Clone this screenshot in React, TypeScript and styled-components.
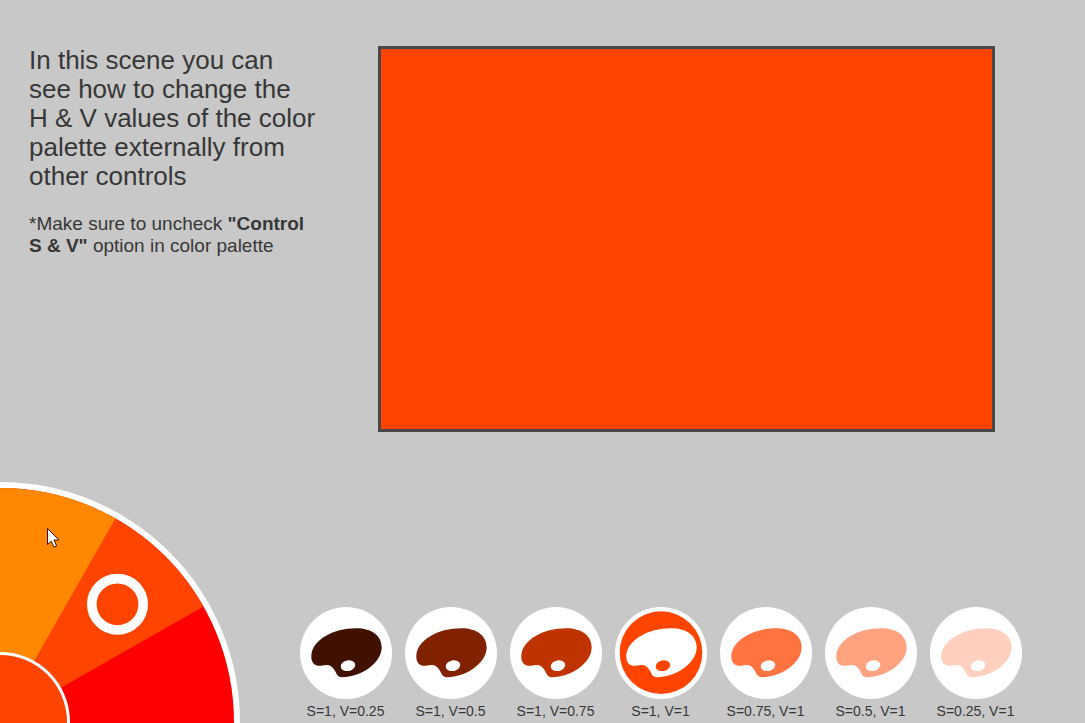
import React, { useState } from "react";
import styled, { createGlobalStyle } from "styled-components";

const GlobalStyle = createGlobalStyle`
  * { box-sizing: border-box; }
  body {
    margin: 0;
    background: #c8c8c8;
    color: #373737;
    font-family: "Liberation Sans", Arial, sans-serif;
  }
`;

const Page = styled.main`
  min-height: 100vh;
  display: flex;
  flex-direction: column;
  justify-content: space-between;
  overflow: hidden;
`;

const Top = styled.section`
  display: flex;
  align-items: flex-start;
  justify-content: space-between;
  gap: 49px;
  padding: 46px 90px 0 29px;
`;

const Intro = styled.div`
  flex: 0 0 300px;
`;

const Lead = styled.p`
  margin: 0 0 22px;
  font-size: 26px;
  line-height: 29px;
`;

const Note = styled.p`
  margin: 0;
  font-size: 19px;
  line-height: 22px;
`;

const Preview = styled.div<{ $color: string }>`
  flex: 1;
  aspect-ratio: 8 / 5;
  border: 3px solid #484848;
  background: ${(p) => p.$color};
`;

const Bottom = styled.section`
  display: flex;
  align-items: flex-end;
  gap: 53px;
  padding-right: 57px;
`;

const Wheel = styled.svg`
  display: block;
  flex: none;
  width: 240px;
  height: 241px;
`;

const Swatches = styled.fieldset`
  flex: 1;
  min-width: 0;
  display: grid;
  grid-template-columns: repeat(7, 1fr);
  margin: 0;
  padding: 0 0 3px;
  border: 0;
`;

const Swatch = styled.label`
  display: flex;
  flex-direction: column;
  align-items: center;
  gap: 3px;
  font-size: 14px;
  line-height: 18px;
  white-space: nowrap;
  cursor: pointer;
`;

const Radio = styled.input`
  appearance: none;
  grid-area: 1 / 1;
  width: 92px;
  height: 92px;
  margin: 0;
  border-radius: 50%;
  background: #ffffff;
  cursor: pointer;
`;

const Disc = styled.span`
  display: grid;
`;

const Icon = styled.svg`
  grid-area: 1 / 1;
  width: 92px;
  height: 92px;
  pointer-events: none;
`;

const options = [
  { label: "S=1, V=0.25", color: "#401100" },
  { label: "S=1, V=0.5", color: "#802200" },
  { label: "S=1, V=0.75", color: "#bf3300" },
  { label: "S=1, V=1", color: "#ff4400" },
  { label: "S=0.75, V=1", color: "#ff7340" },
  { label: "S=0.5, V=1", color: "#ffa280" },
  { label: "S=0.25, V=1", color: "#ffd0bf" },
];

function PaletteIcon({ color, active }: { color: string; active: boolean }) {
  const shape = active ? "#ffffff" : color;
  const hole = active ? color : "#ffffff";
  return (
    <Icon viewBox="0 6 276 276" aria-hidden="true">
      {active && <circle cx="138" cy="143" r="124" fill={color} />}
      <path
        fill={shape}
        d="M34 152C37 106 98 70 168 70C216 70 245 93 245 127C245 175 182 217 126 217C112 217 110 206 104 196C97 183 88 179 78 180C68 181 62 183 55 182C41 181 33 169 34 152Z"
      />
      <ellipse cx="144" cy="182" rx="22" ry="16" transform="rotate(-12 144 182)" fill={hole} />
    </Icon>
  );
}

function HueWheel({ color }: { color: string }) {
  return (
    <Wheel viewBox="0 0 240 241" role="img" aria-label="Hue wheel">
      <circle cx="0" cy="240" r="240" fill="#ffffff" />
      <circle cx="0" cy="240" r="234" fill="#ff0000" />
      <path d="M-1 241L115.5 36.5A234 234 0 0 1 203.5 124.5Z" fill="#ff4400" />
      <path d="M-1 241L-1 6A234 234 0 0 1 115.5 36.5Z" fill="#ff8800" />
      <circle cx="0" cy="240" r="70" fill="#ffffff" />
      <circle cx="0" cy="240" r="67" fill={color} />
      <circle cx="117.5" cy="122.3" r="25.7" fill={color} stroke="#ffffff" strokeWidth="9.6" />
      <path
        d="M47.5 46.5V62.5L51.2 59.2L54 65.2L56.6 64L54 58H59Z"
        fill="#ffffff"
        stroke="#401100"
        strokeWidth="1"
      />
    </Wheel>
  );
}

export default function App() {
  const [selected, setSelected] = useState(3);
  const color = options[selected].color;
  return (
    <>
      <GlobalStyle />
      <Page>
        <Top>
          <Intro>
            <Lead>
              In this scene you can
              <br />
              see how to change the
              <br />
              H &amp; V values of the color
              <br />
              palette externally from
              <br />
              other controls
            </Lead>
            <Note>
              *Make sure to uncheck <b>"Control</b>
              <br />
              <b>S &amp; V"</b> option in color palette
            </Note>
          </Intro>
          <Preview $color={color} />
        </Top>
        <Bottom>
          <HueWheel color={color} />
          <Swatches aria-label="Saturation and value">
            {options.map((o, i) => (
              <Swatch key={o.label}>
                <Disc>
                  <Radio
                    type="radio"
                    name="sv"
                    checked={i === selected}
                    onChange={() => setSelected(i)}
                  />
                  <PaletteIcon color={o.color} active={i === selected} />
                </Disc>
                {o.label}
              </Swatch>
            ))}
          </Swatches>
        </Bottom>
      </Page>
    </>
  );
}
